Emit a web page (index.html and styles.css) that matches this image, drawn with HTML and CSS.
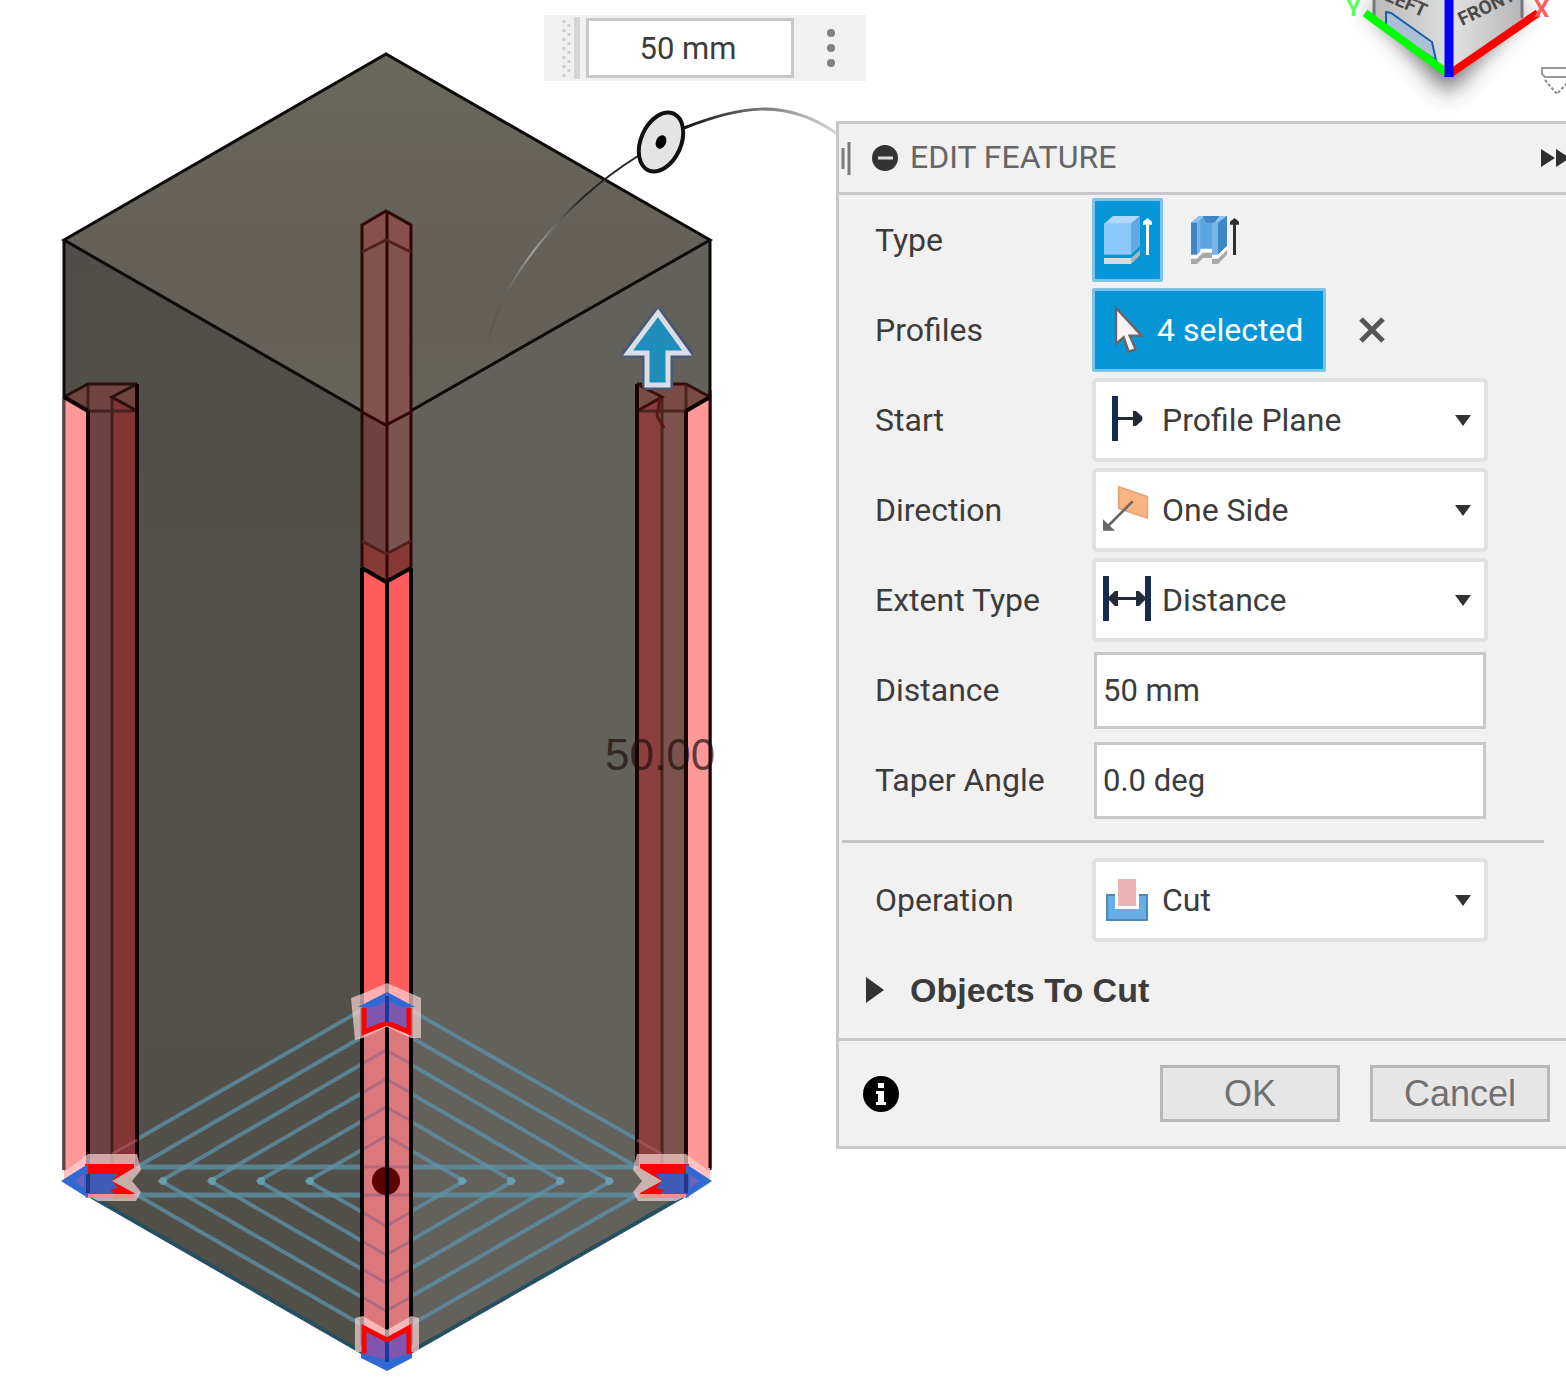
FILE: index.html
```
<!DOCTYPE html>
<html lang="en">
<head>
  <meta charset="UTF-8">
  <meta name="viewport" content="width=device-width, initial-scale=1.0">
  <title>Edit Feature</title>
  <link rel="stylesheet" href="styles.css">
</head>
<body>
  <div class="workspace">
    <div class="stage">
      <svg class="model" viewBox="0 0 836 1395" width="836" height="1395">
        <defs>
          <linearGradient id="topFace" x1="0" y1="0" x2="0" y2="1">
            <stop offset="0" stop-color="#6a675d"/>
            <stop offset="0.6" stop-color="#645f57"/>
            <stop offset="1" stop-color="#67645c"/>
          </linearGradient>
          <linearGradient id="leftFace" x1="0" y1="0" x2="0" y2="1">
            <stop offset="0" stop-color="#4f4e48"/>
            <stop offset="0.4" stop-color="#54514b"/>
            <stop offset="1" stop-color="#504f48"/>
          </linearGradient>
          <linearGradient id="arcLeft" x1="0" y1="1" x2="1" y2="0">
            <stop offset="0" stop-color="#222" stop-opacity="0"/>
            <stop offset="0.4" stop-color="#aaa"/>
            <stop offset="0.7" stop-color="#222"/>
          </linearGradient>
          <linearGradient id="arcRight">
            <stop offset="0" stop-color="#111"/>
            <stop offset="0.5" stop-color="#777"/>
            <stop offset="1" stop-color="#ddd"/>
          </linearGradient>
        </defs>

        <!-- body -->
        <path fill="url(#topFace)" d="M386 54 710 240 386 425 64 240Z"/>
        <path fill="url(#leftFace)" d="M64 240 386 425V1367L64 1181Z"/>
        <path fill="#62615b" d="M710 240 386 425V1367L710 1181Z"/>
        <g fill="none" stroke="#0c0b0a" stroke-width="3">
          <path d="M64 240 386 54 710 240 386 425Z"/>
          <path d="M64 240V1170M710 240V1170M386 425V1340"/>
        </g>
        <path fill="none" stroke="#27505f" stroke-width="4" d="M80 1190 386 1366 694 1190"/>

        <!-- sketch lines on the base -->
        <g fill="none" stroke="#5d93a8" stroke-opacity=".75" stroke-width="4">
          <path d="M94 1164 386 996 680 1164"/>
          <path d="M137 1167 386 1023 637 1167M137 1195 386 1339 637 1195"/>
          <path d="M161 1181 386 1050 611 1181 386 1311Z"/>
          <path d="M210 1181 386 1079 562 1181 386 1283Z"/>
          <path d="M259 1181 386 1107 513 1181 386 1255Z"/>
          <path d="M308 1181 386 1136 464 1181 386 1226Z"/>
          <path d="M137 1167H637M137 1195H637" stroke-width="5"/>
        </g>
        <g fill="#6ba9c0" fill-opacity=".7">
          <circle cx="163" cy="1181" r="4"/><circle cx="212" cy="1181" r="4"/><circle cx="261" cy="1181" r="4"/><circle cx="310" cy="1181" r="4"/>
          <circle cx="609" cy="1181" r="4"/><circle cx="560" cy="1181" r="4"/><circle cx="511" cy="1181" r="4"/><circle cx="462" cy="1181" r="4"/>
        </g>

        <!-- left cut -->
        <path fill="#70443f" d="M64 397 88 384H137V411H88Z"/>
        <path fill="#ff9898" d="M64 399 88 411V1170L64 1181Z"/>
        <path fill="#6c4340" d="M88 411H113V1170H88Z"/>
        <path fill="#823532" d="M112 397 137 411V1170H112Z"/>
        <g fill="none" stroke="#42211d" stroke-width="3">
          <path d="M64 398V1170" stroke="#5e4340"/>
          <path d="M88 411H137M112 397V1170M88 384V411"/>
          <path d="M64 397 88 384H137L112 397 137 411" stroke="#2a100d"/>
          <path d="M64 397 88 411" stroke="#0a0000" stroke-width="4"/>
          <path d="M88 411V1166M137 384V1166" stroke="#120100" stroke-width="4"/>
        </g>

        <!-- right cut -->
        <path fill="#7a4a44" d="M710 397 686 384H637V411H686Z"/>
        <path fill="#ff9898" d="M710 399 686 411V1170L710 1181Z"/>
        <path fill="#7b534c" d="M686 411H661V1170H686Z"/>
        <path fill="#8c403e" d="M662 397 637 411V1170H662Z"/>
        <g fill="none" stroke="#4c2420" stroke-width="3">
          <path d="M686 411H637M662 397V1170M686 384V411"/>
          <path d="M710 397 686 384H637L662 397 637 411" stroke="#3a0c0a"/>
          <path d="M710 397 686 411" stroke="#0a0000" stroke-width="4"/>
          <path d="M686 411V1166M637 384V1166" stroke="#1c0202" stroke-width="4"/>
          <path d="M710 390V1168" stroke="#1c0202"/>
          <path d="M660 398 657 416 664 428" stroke="#5c1514"/>
        </g>
        <path fill="none" stroke="#a06068" stroke-opacity=".6" stroke-width="3" d="M112 1154 137 1140M662 1154 637 1140"/>

        <!-- middle cut -->
        <path fill="#82534d" d="M362 225 386 211 411 225V412L386 425 362 412Z"/>
        <path fill="#87504b" d="M362 225 386 211 411 225V252L386 240 362 252Z"/>
        <path fill="#6f423f" d="M362 412 386 425V554L362 541Z"/>
        <path fill="#7a544e" d="M411 412 386 425V554L411 541Z"/>
        <path fill="#873936" d="M362 541 386 554 411 541V568L386 582 362 568Z"/>
        <path fill="#ff5c5c" d="M362 568 386 582 411 568V1020H362Z"/>
        <path fill="#dc787b" d="M362 1020H411V1345H362Z"/>
        <g fill="none" stroke="#b06a7f" stroke-width="3">
          <path d="M362 1064 386 1050 411 1064M362 1093 386 1079 411 1093M362 1121 386 1107 411 1121M362 1150 386 1136 411 1150"/>
          <path d="M362 1212 386 1226 411 1212M362 1241 386 1255 411 1241M362 1269 386 1283 411 1269M362 1297 386 1311 411 1297M362 1167H411M362 1195H411"/>
        </g>
        <circle cx="386" cy="1181" r="14" fill="#5c0004"/>
        <g fill="none" stroke="#300605" stroke-width="3">
          <path d="M362 568V225L386 211 411 225V568M387 211V582M362 412 386 425 411 412"/>
          <path d="M362 252 386 240 411 252M362 541 386 554 411 541" stroke="#54201e"/>
          <path d="M362 568 386 582 411 568" stroke="#000" stroke-width="4"/>
          <path d="M362 568V1345M411 568V1345M387 580V1345" stroke="#000" stroke-width="4"/>
        </g>

        <!-- selected profiles: light halo first, then the shapes -->
        <g fill="#ffd9d5" fill-opacity=".68">
          <path d="M351 998 364 993 387 983 410 993 421 998V1038H411L387 1027 363 1038 355 1040Z"/>
          <path d="M355 1318 363 1316 387 1330 411 1316 419 1318V1352H355Z"/>
          <path d="M64 1172 88 1154H137L141 1170 132 1181 141 1192 136 1201H98L64 1184Z"/>
          <path d="M710 1172 686 1154H637L633 1170 642 1181 633 1192 638 1201H676L710 1184Z"/>
        </g>
        <path fill="#7f55ae" d="M362 1007 387 993 411 1007V1034L387 1022 362 1034Z"/>
        <path fill="none" stroke="#f00" stroke-width="5" d="M364 1008V1032L387 1023 409 1032V1008"/>
        <path fill="#3169d3" d="M358 1007 387 992 415 1007H400L387 1000 374 1007Z"/>
        <path stroke="#1739a0" stroke-width="4" d="M387 996V1022"/>
        <path fill="#7f55ae" d="M362 1326 387 1339 411 1326V1354L387 1367 362 1354Z"/>
        <path fill="none" stroke="#f00" stroke-width="5" d="M364 1354V1328L387 1340 409 1328V1354"/>
        <path fill="#3169d3" d="M361 1353 387 1360 412 1353V1358L387 1371 361 1358Z"/>
        <path stroke="#1739a0" stroke-width="4" d="M387 1342V1362"/>

        <path fill="#3f5bb5" d="M87 1167H130L112 1181 130 1195H87Z"/>
        <path fill="#f00" d="M85 1164H134V1168L112 1181 134 1193V1195H115L110 1190 118 1188 112 1181 118 1174H85Z"/>
        <path fill="#ff8c8a" d="M85 1194H134V1198H85Z"/>
        <path fill="#3169d3" d="M61 1181 88 1164V1198Z"/>
        <path fill="#7560bd" d="M75 1181 84 1174V1188Z"/>
        <path stroke="#253784" stroke-width="4" d="M88 1174V1193"/>
        <path fill="#3f5bb5" d="M687 1167H644L662 1181 644 1195H687Z"/>
        <path fill="#f00" d="M689 1164H640V1168L662 1181 640 1193V1195H659L664 1190 656 1188 662 1181 656 1174H689Z"/>
        <path fill="#ff8c8a" d="M689 1194H640V1198H689Z"/>
        <path fill="#3169d3" d="M712 1181 686 1164V1198Z"/>
        <path fill="#7560bd" d="M699 1181 690 1174V1188Z"/>
        <path stroke="#253784" stroke-width="4" d="M686 1174V1193"/>

        <!-- distance arrow and taper handle -->
        <path fill="#208cba" stroke="#4b5870" stroke-width="10" stroke-linejoin="round" d="M658 313 688 353H668V385H647V353H627Z"/>
        <path fill="#208cba" stroke="#d8dde8" stroke-width="5" d="M658 313 687 353H668V385H647V353H628Z"/>
        <path fill="none" stroke="url(#arcLeft)" stroke-width="2" d="M487 345C500 282 560 205 638 156"/>
        <path fill="none" stroke="url(#arcRight)" stroke-width="3" d="M684 128C735 108 785 95 840 136"/>
        <ellipse cx="661" cy="142" rx="20" ry="31" transform="rotate(24 661 142)" fill="#e4e4e4" stroke="#111" stroke-width="4"/>
        <ellipse cx="661" cy="142" rx="5" ry="7" transform="rotate(24 661 142)" fill="#000"/>
        <text class="dimension" x="605" y="770">50.00</text>
      </svg>

      <div class="mini-toolbar">
        <svg class="grip" viewBox="0 0 14 62" width="14" height="62">
          <path fill="none" stroke="#cfcfcf" stroke-width="3" stroke-dasharray="3 6" d="M6 3V60M11 7V60"/>
        </svg>
        <span class="grip-bar"></span>
        <input class="mini-input" type="text" value="50 mm" aria-label="Distance value">
        <button class="more" type="button" aria-label="More options">
          <svg viewBox="0 0 10 40" width="10" height="40" fill="#808080">
            <circle cx="6" cy="5" r="4"/><circle cx="6" cy="20" r="4"/><circle cx="6" cy="35" r="4"/>
          </svg>
        </button>
      </div>
    </div>

    <div class="side">
      <svg class="viewcube" viewBox="0 0 236 121" width="236" height="121">
        <defs>
          <filter id="soft" x="-30%" y="-50%" width="160%" height="200%"><feGaussianBlur stdDeviation="11"/></filter>
          <linearGradient id="cubeLeft"><stop offset="0" stop-color="#b9b9b9"/><stop offset="1" stop-color="#ddd"/></linearGradient>
          <linearGradient id="cubeRight"><stop offset="0" stop-color="#e4e4e4"/><stop offset="1" stop-color="#b5b5b5"/></linearGradient>
        </defs>
        <path fill="#444" fill-opacity=".75" filter="url(#soft)" d="M36 5H200L118 94Z"/>
        <path fill="url(#cubeLeft)" d="M43 0H119V74L43 19Z"/>
        <path fill="url(#cubeRight)" d="M119 0H193V19L119 74Z"/>
        <path fill="none" stroke="#777" stroke-width="3" d="M44 0V16M192 0V18"/>
        <path fill="#abc0d6" stroke="#1560ac" stroke-width="2" d="M56 12 61 13 102 42 106 60 101 57 56 27Z"/>
        <text class="cube-label" transform="translate(54 0) rotate(24)">LEFT</text>
        <text class="cube-label" transform="translate(132 26) rotate(-26)">FRONT</text>
        <path stroke="#0f0" stroke-width="8" d="M35 13 117 73"/>
        <path stroke="#f00" stroke-width="8" d="M121 73 208 13"/>
        <path stroke="#00f" stroke-width="9" d="M119 0V77"/>
        <text class="axis axis-y" x="16" y="16">Y</text>
        <text class="axis axis-x" x="204" y="17">X</text>
        <path fill="#fff" stroke="#999" stroke-width="2" d="M212 68H240V77H215L212 74Z"/>
        <path fill="none" stroke="#888" stroke-width="2" stroke-dasharray="3 2" d="M215 80 227 94 240 80"/>
      </svg>

      <form class="panel">
        <div class="panel-header">
          <svg viewBox="0 0 68 36" width="68" height="36">
            <path stroke="#7a7a7a" stroke-width="3" d="M4 8V29M10 2V35"/>
            <circle cx="46" cy="18" r="13" fill="#333"/>
            <path stroke="#ddd" stroke-width="3" d="M39 18H54"/>
          </svg>
          <h1 class="panel-title">EDIT FEATURE</h1>
          <svg class="expand" viewBox="0 0 25 20" width="25" height="20">
            <path fill="#2e2e2e" d="M0 1 14 10 0 19ZM15 1 29 10 15 19Z"/>
          </svg>
        </div>

        <div class="rows">
          <div class="row">
            <span class="label">Type</span>
            <div class="controls">
              <button class="type-button active" type="button" aria-label="Extrude">
                <svg viewBox="66 75 150 150" width="50" height="50">
                  <path fill="#b0d9ff" d="M69 102 96 78H177L150 102Z"/>
                  <path fill="#8ac8fa" d="M69 100H150V194H69Z"/>
                  <path fill="#62a9e4" d="M150 100 177 78V168L150 194Z"/>
                  <path fill="#dcdcd8" d="M69 204H150V222H69Z"/>
                  <path fill="#a9b6bc" d="M150 204 177 180V196L150 222Z"/>
                  <path fill="#fff" d="M195 104H186V95L200 84 213 95V104H204V195H195Z"/>
                </svg>
              </button>
              <button class="type-button" type="button" aria-label="Thin extrude">
                <svg viewBox="327 75 150 150" width="50" height="50">
                  <path fill="#5ba6e0" d="M330 98 354 78H438V168L410 194H393V176H357V194H330Z"/>
                  <path fill="#8bc4f2" d="M330 98 354 78H370L348 98ZM393 98 415 78H438L411 98Z"/>
                  <path fill="#3f86c4" d="M330 98H348V194H330ZM411 98 438 78V168L411 194ZM366 78H415L400 98H375Z"/>
                  <path fill="#75b5ea" d="M348 98 358 90V184L348 194ZM393 98H411V194H393Z"/>
                  <path fill="#fff" d="M330 194H348L366 177H393V194H411L438 168V178L411 206H393V186H366L348 206H330Z"/>
                  <path fill="#aaa9a6" d="M330 206H348L366 188H393V206H411L438 180V194L411 222H393V204H366L348 222H330Z"/>
                  <path fill="#2e2e2e" d="M456 104H447V95L461 84 474 95V104H465V195H456Z"/>
                </svg>
              </button>
            </div>
          </div>

          <div class="row">
            <span class="label">Profiles</span>
            <div class="controls">
              <button class="select-button" type="button">
                <svg viewBox="100 345 96 150" width="32" height="50">
                  <path fill="#f5f3f3" stroke="#6c6464" stroke-width="7" d="M109 354V462L132 442 147 485 168 478 150 437H186Z"/>
                </svg>
                4 selected
              </button>
              <button class="clear" type="button" aria-label="Clear selection">
                <svg viewBox="0 0 28 28" width="28" height="28"><path stroke="#555" stroke-width="5" d="M3 3 25 25M25 3 3 25"/></svg>
              </button>
            </div>
          </div>

          <div class="row">
            <label class="label" for="start">Start</label>
            <div class="dropdown">
              <select id="start"><option>Profile Plane</option></select>
              <svg class="icon" viewBox="60 615 162 150" width="54" height="50">
                <path fill="#172b50" d="M96 618H114V753H96Z"/>
                <path fill="#222b38" d="M114 681H159V663H168L187 680V691L168 708H159V690H114Z"/>
              </svg>
            </div>
          </div>

          <div class="row">
            <label class="label" for="direction">Direction</label>
            <div class="dropdown">
              <select id="direction"><option>One Side</option></select>
              <svg class="icon" viewBox="60 75 162 150" width="54" height="50">
                <path fill="#f8b583" stroke="#e6a577" stroke-width="5" d="M116 80 202 110V174L116 145Z"/>
                <path stroke="#666" stroke-width="8" d="M158 124 84 198"/>
                <path fill="#666" d="M69 178 105 212H69Z"/>
              </svg>
            </div>
          </div>

          <div class="row">
            <label class="label" for="extent">Extent Type</label>
            <div class="dropdown">
              <select id="extent"><option>Distance</option></select>
              <svg class="icon" viewBox="60 345 162 150" width="54" height="50">
                <path fill="#172b50" d="M69 348H87V483H69ZM195 348H213V483H195Z"/>
                <path fill="#222b38" d="M87 410 105 393H114V411H168V393H177L195 410V420L177 438H168V420H114V438H105L87 420Z"/>
              </svg>
            </div>
          </div>

          <div class="row">
            <label class="label" for="distance">Distance</label>
            <input class="field" id="distance" type="text" value="50 mm">
          </div>

          <div class="row">
            <label class="label" for="taper">Taper Angle</label>
            <input class="field" id="taper" type="text" value="0.0 deg">
          </div>
        </div>

        <hr class="divider">

        <div class="rows">
          <div class="row">
            <label class="label" for="operation">Operation</label>
            <div class="dropdown">
              <select id="operation"><option>Cut</option></select>
              <svg class="icon" viewBox="792 105 162 150" width="54" height="50">
                <path fill="#65aee6" d="M810 162H837V207H909V162H936V243H810Z"/>
                <path fill="none" stroke="#5289b4" stroke-width="6" d="M837 165H813V240H933V165H909"/>
                <path fill="#ebb3b3" d="M846 117H900V198H846Z"/>
              </svg>
            </div>
          </div>
        </div>

        <button class="group-toggle" type="button">
          <svg viewBox="0 0 18 26" width="18" height="26"><path fill="#333" d="M0 0 18 13 0 26Z"/></svg>
          Objects To Cut
        </button>

        <div class="panel-footer">
          <svg class="info" viewBox="0 0 36 36" width="36" height="36">
            <circle cx="18" cy="18" r="18"/>
            <path fill="#fff" d="M15 7H21V12H15ZM13 15H21V26H23V29H13V26H15V18H13Z"/>
          </svg>
          <button class="action" type="submit">OK</button>
          <button class="action" type="button">Cancel</button>
        </div>
      </form>
    </div>
  </div>
</body>
</html>
```
FILE: styles.css
```
* {
  box-sizing: border-box;
}
body {
  margin: 0;
  background-color: #fff;
  font-family: Roboto, Arial, sans-serif;
  font-size: 32px;
  color: #3c3c3c;
}
button, input, select {
  font: inherit;
  color: inherit;
}
button {
  padding: 0;
  border: none;
  background: none;
  cursor: pointer;
}
svg {
  display: block;
  flex: none;
}
.workspace {
  display: flex;
}
.stage {
  position: relative;
  flex: none;
}
.side {
  flex: 1;
  min-width: 0;
}
.dimension {
  font-family: "Liberation Sans", Arial, sans-serif;
  font-size: 44px;
  fill: #1c0f0d;
  fill-opacity: 0.7;
}

/* floating value box */
.mini-toolbar {
  position: absolute;
  left: 544px;
  top: 15px;
  z-index: 1;
  display: flex;
  align-items: center;
  height: 66px;
  padding-left: 14px;
  background-color: #f1f1f1;
}
.grip-bar {
  width: 6px;
  height: 62px;
  margin: 0 6px 0 2px;
  background-color: #d5d5d5;
}
.mini-input {
  width: 208px;
  height: 60px;
  padding: 0 8px 0 4px;
  border: 3px solid #c8c8c8;
  background-color: #fff;
  text-align: center;
  font-size: 31px;
}
.more {
  display: flex;
  justify-content: center;
  width: 72px;
}

/* view cube */
.viewcube {
  margin-left: auto;
}
.cube-label {
  font-size: 19px;
  font-weight: bold;
  fill: #4a4a4a;
}
.axis {
  font-size: 24px;
  font-weight: bold;
}
.axis-x {
  fill: #ff5c5c;
}
.axis-y {
  fill: #5cff5c;
}

/* edit panel */
.panel {
  border: 3px solid #c8c8c8;
  border-right: none;
  background-color: #f1f1f1;
}
.panel-header {
  display: flex;
  align-items: center;
  height: 71px;
  border-bottom: 3px solid #c8c8c8;
}
.panel-title {
  margin: 0 0 3px 3px;
  font-size: 32px;
  font-weight: normal;
  color: #666;
}
.expand {
  margin-left: auto;
}
.rows {
  padding: 0 78px 0 36px;
}
.row {
  display: grid;
  grid-template-columns: 217px 1fr;
  align-items: center;
  height: 90px;
}
.controls {
  display: flex;
  align-items: center;
}
.type-button {
  display: flex;
  align-items: center;
  justify-content: center;
  width: 71px;
  height: 84px;
  margin-right: 16px;
}
.active, .select-button {
  border: 3px solid #7cc3e6;
  border-radius: 2px;
  background-color: #0696d7;
}
.select-button {
  display: flex;
  align-items: center;
  gap: 12px;
  height: 84px;
  padding: 0 20px 0 18px;
  color: #fff;
}
.clear {
  margin-left: 32px;
}
.dropdown {
  display: grid;
  align-items: center;
}
.dropdown > *, .dropdown::after {
  grid-area: 1 / 1;
}
.dropdown select {
  width: 100%;
  height: 84px;
  padding: 0 40px 0 66px;
  border: 4px solid #e1e1e1;
  border-radius: 5px;
  background-color: #fff;
  appearance: none;
}
.dropdown::after {
  content: "";
  justify-self: end;
  margin-right: 17px;
  border: 8px solid transparent;
  border-top: 11px solid #333;
  border-bottom: none;
  pointer-events: none;
}
.icon {
  margin-left: 8px;
  pointer-events: none;
}
.field {
  min-width: 0;
  height: 77px;
  margin: 0 2px;
  padding: 0 6px;
  border: 3px solid #c8c8c8;
  background-color: #fff;
  font-size: 31px;
}
.divider {
  height: 3px;
  margin: 15px 22px 12px 3px;
  border: none;
  background-color: #c4c4c4;
}
.group-toggle {
  display: flex;
  align-items: center;
  gap: 26px;
  height: 90px;
  margin-bottom: 3px;
  padding-left: 27px;
  font-family: "Liberation Sans", Arial, sans-serif;
  font-size: 34px;
  font-weight: bold;
}
.panel-footer {
  display: flex;
  align-items: center;
  gap: 30px;
  height: 108px;
  padding: 0 16px 0 24px;
  border-top: 3px solid #c8c8c8;
}
.info {
  margin-right: auto;
}
.action {
  width: 180px;
  height: 57px;
  border: 3px solid #b8b8b8;
  background-color: #e6e6e6;
  font-family: "Liberation Sans", Arial, sans-serif;
  font-size: 36px;
  color: #707070;
}
```
